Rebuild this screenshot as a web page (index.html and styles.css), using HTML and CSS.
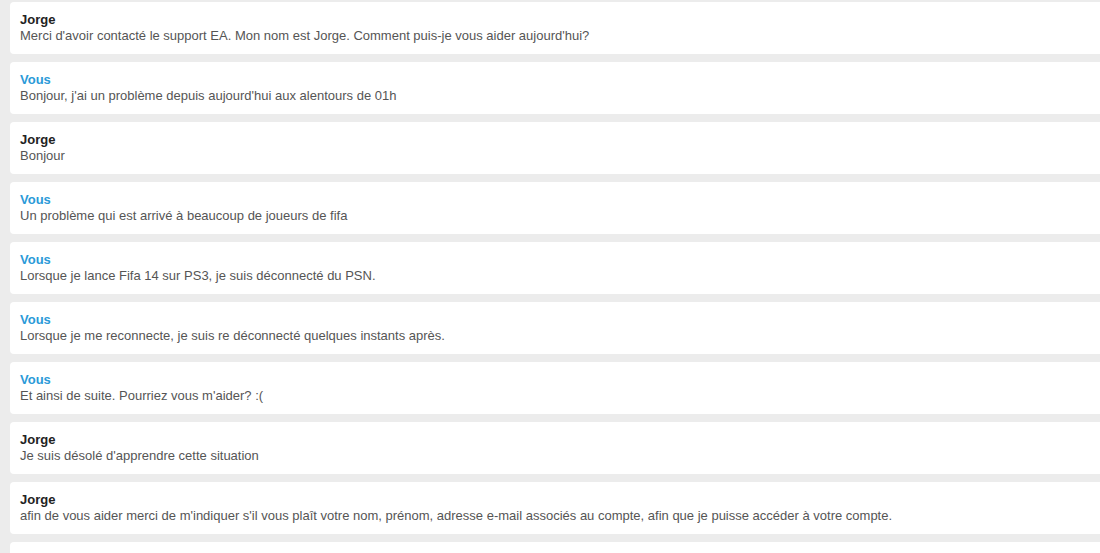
FILE: index.html
```html
<!DOCTYPE html>
<html lang="fr">
<head>
<meta charset="utf-8">
<title>Chat</title>
<link rel="stylesheet" href="styles.css">
</head>
<body>
<div class="chat">
  <div class="msg"><div class="name agent">Jorge</div><div class="text">Merci d'avoir contacté le support EA. Mon nom est Jorge. Comment puis-je vous aider aujourd'hui?</div></div>
  <div class="msg"><div class="name you">Vous</div><div class="text">Bonjour, j'ai un problème depuis aujourd'hui aux alentours de 01h</div></div>
  <div class="msg"><div class="name agent">Jorge</div><div class="text">Bonjour</div></div>
  <div class="msg"><div class="name you">Vous</div><div class="text">Un problème qui est arrivé à beaucoup de joueurs de fifa</div></div>
  <div class="msg"><div class="name you">Vous</div><div class="text">Lorsque je lance Fifa 14 sur PS3, je suis déconnecté du PSN.</div></div>
  <div class="msg"><div class="name you">Vous</div><div class="text">Lorsque je me reconnecte, je suis re déconnecté quelques instants après.</div></div>
  <div class="msg"><div class="name you">Vous</div><div class="text">Et ainsi de suite. Pourriez vous m'aider? :(</div></div>
  <div class="msg"><div class="name agent">Jorge</div><div class="text">Je suis désolé d'apprendre cette situation</div></div>
  <div class="msg"><div class="name agent">Jorge</div><div class="text">afin de vous aider merci de m'indiquer s'il vous plaît votre nom, prénom, adresse e-mail associés au compte, afin que je puisse accéder à votre compte.</div></div>
  <div class="msg msg-empty"></div>
</div>
</body>
</html>
```
FILE: styles.css
```css
html, body {
  margin: 0;
  padding: 0;
  background: #ececec;
  overflow: hidden;
  height: 553px;
}
.chat {
  display: flex;
  flex-direction: column;
  gap: 8px;
  padding: 2px 0 0 10px;
  font-family: "Liberation Sans", Arial, sans-serif;
  font-size: 13px;
  line-height: 16px;
}
.msg {
  background: #fff;
  border-radius: 4px;
  padding: 10px;
  margin-right: -20px;
}
.msg-empty {
  height: 32px;
}
.name {
  font-weight: bold;
}
.name.agent { color: #222; }
.name.you { color: #2b9ad8; }
.text { color: #555; }
```
